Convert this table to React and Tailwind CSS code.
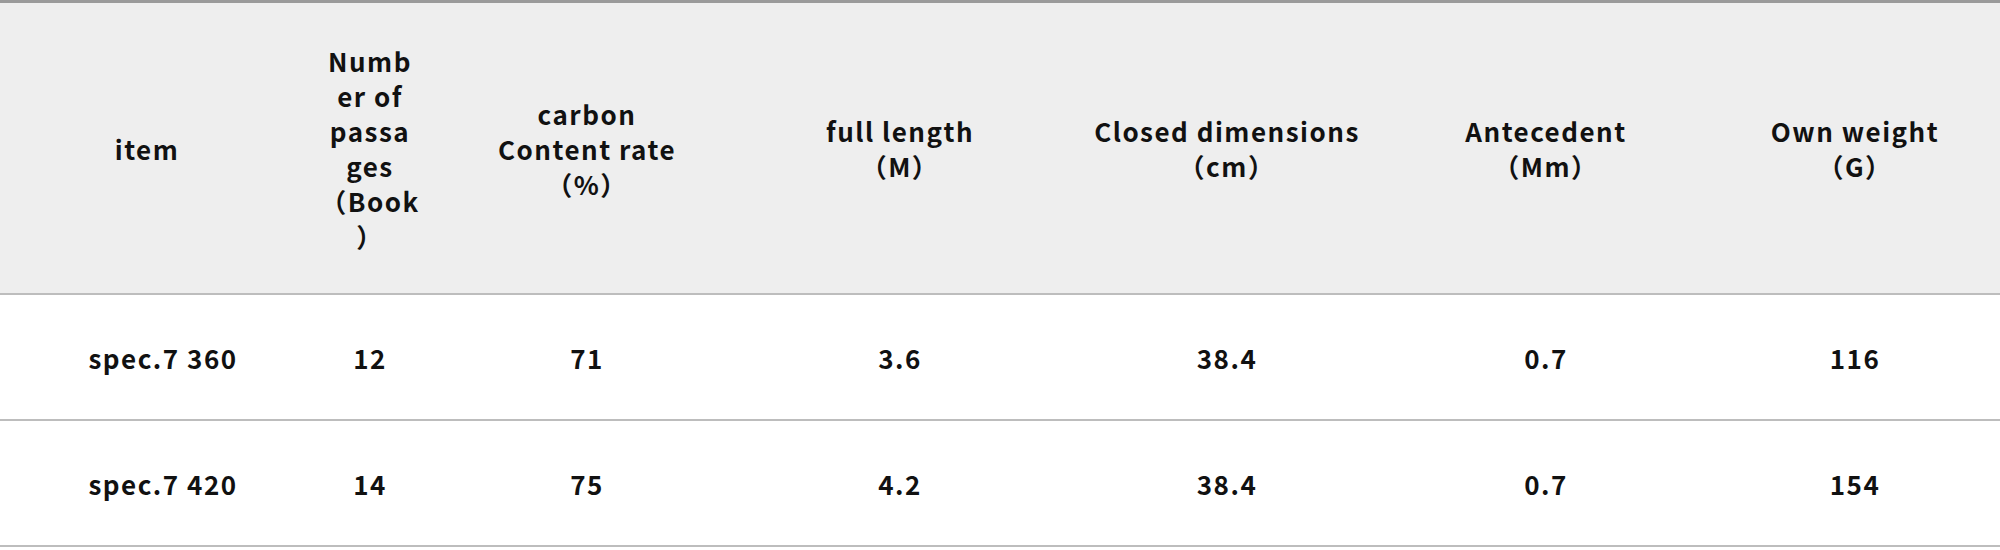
const cols = 'grid grid-cols-[294px_152px_282px_344px_310px_328px_1fr]'

const headers = [
  ['item'],
  ['Numb', 'er of', 'passa', 'ges', '（Book', '）'],
  ['carbon', 'Content rate', '（%）'],
  ['full length', '（M）'],
  ['Closed dimensions', '（cm）'],
  ['Antecedent', '（Mm）'],
  ['Own weight', '（G）'],
]

const rows = [
  ['spec.7 360', '12', '71', '3.6', '38.4', '0.7', '116'],
  ['spec.7 420', '14', '75', '4.2', '38.4', '0.7', '154'],
]

export default function App() {
  return (
    <div className="w-[2000px] h-[550px] bg-white text-[#111] font-['Noto_Sans_CJK_JP',sans-serif] font-bold">
      <div className="border-t-[3px] border-[#9a9a9a]">
        <div className={`${cols} h-[292px] bg-[#eeeeee] border-b-2 border-[#bdbdbd] text-[26px] leading-[35px] tracking-[1.5px]`}>
          {headers.map((h, i) => (
            <div key={i} className="flex items-center justify-center text-center whitespace-nowrap">
              <div>
                {h.map(l => <div key={l}>{l}</div>)}
              </div>
            </div>
          ))}
        </div>
        {rows.map((r, ri) => (
          <div key={ri} className={`${cols} h-[126px] border-b-2 border-[#bdbdbd] text-[26px] tracking-[1.5px]`}>
            {r.map((c, ci) => (
              <div key={ci} className={`flex items-center justify-center ${ci === 0 ? 'pl-[32px]' : ''}`}>{c}</div>
            ))}
          </div>
        ))}
      </div>
    </div>
  )
}
